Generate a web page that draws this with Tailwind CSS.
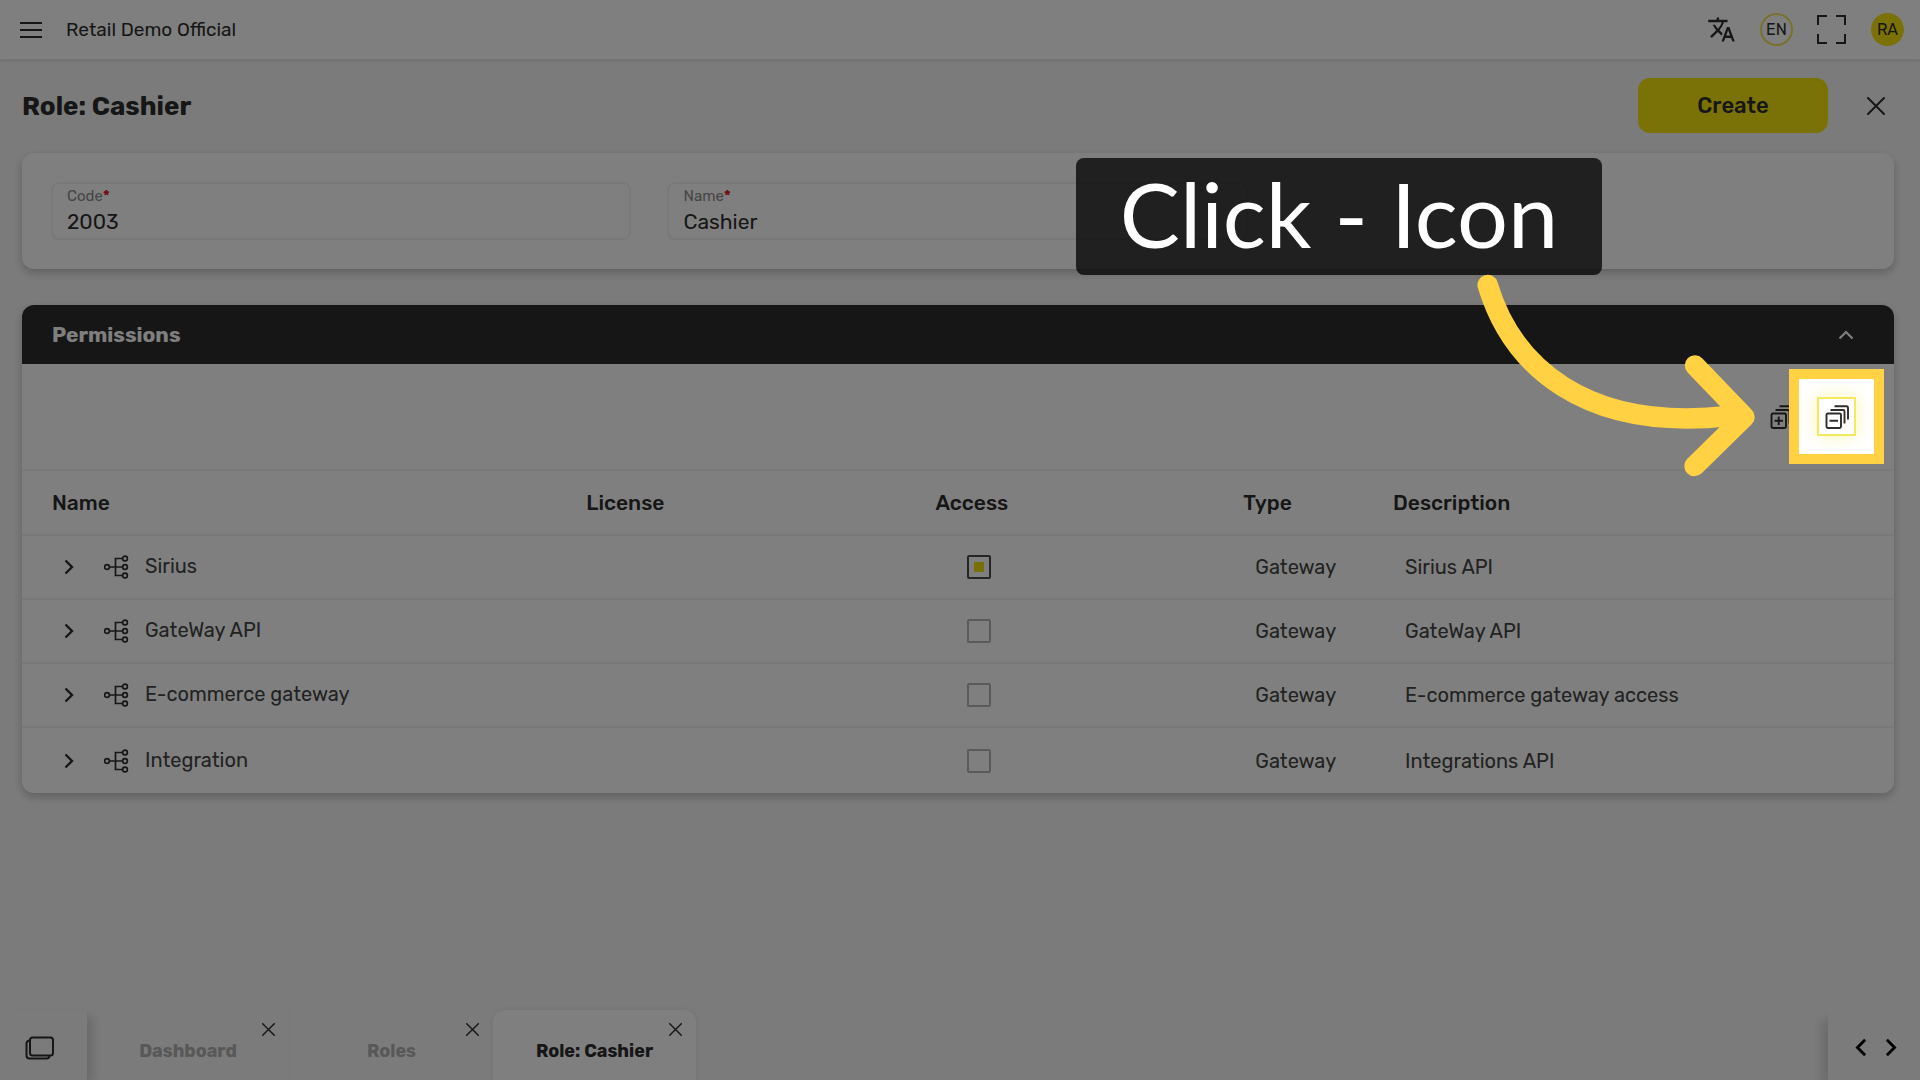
<!DOCTYPE html>
<html lang="en">

<head>
  <meta charset="UTF-8">
  <title>Role: Cashier</title>
  <meta name="viewport" content="width=device-width, initial-scale=1.0">
  <script src="https://cdn.jsdelivr.net/npm/@tailwindcss/browser@4"></script>
</head>

<body class="relative min-h-screen flex flex-col overflow-x-hidden bg-[#f7f7f7] text-[#2d2d2d] font-['Rubik','Roboto',sans-serif]">

  <!-- Shared icons -->
  <svg class="hidden">
    <symbol id="icon-chevron" viewBox="0 0 10 16">
      <path d="M1.500 1.500L8 8L1.500 14.500" fill="none" stroke="currentColor" stroke-width="2.400" />
    </symbol>
    <symbol id="icon-close" viewBox="0 0 18 18">
      <path d="M1 1L17 17M17 1L1 17" fill="none" stroke="currentColor" stroke-width="2" stroke-linecap="round" />
    </symbol>
    <symbol id="icon-gateway" viewBox="0 0 25 24">
      <g fill="none" stroke="currentColor" stroke-width="1.700">
        <circle cx="3" cy="12" r="2.400" />
        <circle cx="21" cy="3.500" r="2.400" />
        <circle cx="21" cy="12" r="2.400" />
        <circle cx="21" cy="20.500" r="2.400" />
        <path d="M5.400 12H18.600M18.600 3.500H11.500V20.500H18.600" />
      </g>
    </symbol>
    <symbol id="icon-stack" viewBox="0 0 24 24">
      <g fill="none" stroke="currentColor" stroke-width="1.900">
        <rect x="1.500" y="8.500" width="14.500" height="14.500" rx="1.500" />
        <path d="M5.500 5H18Q19.500 5 19.500 6.500V18.500M9.500 1.300H21.500Q23 1.300 23 2.800V14.500M4.500 15.800H13" />
      </g>
    </symbol>
  </svg>

  <!-- Top bar -->
  <header class="h-[60px] flex items-center justify-between pl-5 pr-4 bg-white border-b border-[#ececec] shadow-sm">
    <div class="flex items-center gap-6">
      <button aria-label="Menu">
        <svg class="w-[22px] h-[18px]" viewBox="0 0 22 18">
          <path d="M0 2H22M0 9H22M0 16H22" stroke="currentColor" stroke-width="2" />
        </svg>
      </button>
      <span class="text-[19px] leading-6">Retail Demo Official</span>
    </div>
    <div class="flex items-center gap-6">
      <button aria-label="Translate">
        <svg class="size-[29px]" viewBox="0 0 24 24" fill="currentColor">
          <path d="M12.870 15.070l-2.540-2.510.030-.030A17.520 17.520 0 0 0 14.070 6H17V4h-7V2H8v2H1v1.990h11.170C11.500 7.920 10.440 9.750 9 11.350 8.070 10.320 7.300 9.190 6.690 8h-2c.730 1.630 1.730 3.170 2.980 4.560l-5.090 5.020L4 19l5-5 3.110 3.110.760-2.040zM18.500 10h-2L12 22h2l1.120-3h4.750L21 22h2l-4.500-12zm-2.620 7l1.620-4.330L19.120 17h-3.240z" />
        </svg>
      </button>
      <button class="size-[33px] rounded-full border-2 border-[#efe25a] text-base leading-none">EN</button>
      <button aria-label="Full screen">
        <svg class="size-[30px]" viewBox="0 0 30 30">
          <path d="M10 1H1V10M19 1H28V10M1 19V28H10M28 19V28H19" fill="none" stroke="currentColor" stroke-width="2" />
        </svg>
      </button>
      <button class="size-[33px] rounded-full bg-[#f5e30e] text-base leading-none">RA</button>
    </div>
  </header>

  <main class="flex-1 pl-[22px] pr-[26px]">
    <div class="h-[93px] flex items-center justify-between">
      <h1 class="text-[26px] leading-8 font-bold">Role: Cashier</h1>
      <div class="flex items-center gap-[39px] pr-[9px] pb-[2px]">
        <button class="w-[190px] h-[55px] rounded-xl bg-[#f5e30e] text-[22px] font-medium">Create</button>
        <button aria-label="Close"><svg class="size-[18px]"><use href="#icon-close" /></svg></button>
      </div>
    </div>

    <form class="flex gap-9 px-[29px] py-[29px] bg-white rounded-xl shadow-[0_4px_10px_rgba(0,0,0,0.22)]">
      <div class="w-[32%] h-[58px] px-[14px] pt-[3px] border-2 border-[#f2f2f2] rounded-lg">
        <label for="code" class="block text-[15px] leading-[18px] text-[#8c8c8c]">Code<span class="text-[#e02020] font-bold">*</span></label>
        <input id="code" value="2003" class="block w-full text-[21px] leading-[34px] outline-none">
      </div>
      <div class="w-[32%] h-[58px] px-[14px] pt-[3px] border-2 border-[#f2f2f2] rounded-lg">
        <label for="name" class="block text-[15px] leading-[18px] text-[#8c8c8c]">Name<span class="text-[#e02020] font-bold">*</span></label>
        <input id="name" value="Cashier" class="block w-full text-[21px] leading-[34px] outline-none">
      </div>
    </form>

    <section class="mt-9 bg-white rounded-xl shadow-[0_4px_10px_rgba(0,0,0,0.22)]">
      <div class="h-[59px] flex items-center justify-between pl-[30px] pr-10 rounded-t-xl bg-[#2d2d2d] text-white">
        <h2 class="text-[21px] leading-7 font-bold">Permissions</h2>
        <button aria-label="Collapse section">
          <svg class="w-4 h-[10px]" viewBox="0 0 16 10">
            <path d="M1.500 8.500L8 2L14.500 8.500" fill="none" stroke="currentColor" stroke-width="2.200" />
          </svg>
        </button>
      </div>

      <div class="h-[105px] flex items-center justify-end gap-4 pr-[38px]">
        <button aria-label="Expand all" class="size-[39px] flex items-center justify-center">
          <svg class="size-6" viewBox="0 0 24 24">
            <use href="#icon-stack" />
            <path d="M8.700 11.600V20" stroke="currentColor" stroke-width="1.900" />
          </svg>
        </button>
        <div class="relative">
          <button aria-label="Collapse all" class="size-[39px] flex items-center justify-center border-2 border-[#f5ea5e] bg-white shadow-[0_0_18px_rgba(245,230,60,0.4)]">
            <svg class="size-6"><use href="#icon-stack" /></svg>
          </button>
          <!-- Spotlight: the outer shadow dims everything else -->
          <div class="absolute -inset-7 z-40 border-[10px] border-[#ffd143] shadow-[0_0_0_3000px_rgba(0,0,0,0.5)] pointer-events-none"></div>
        </div>
      </div>

      <table class="w-full table-fixed text-left text-[20px] leading-6">
        <colgroup>
          <col class="w-[29.5%]">
          <col class="w-[18.6%]">
          <col class="w-[16.5%]">
          <col class="w-[8%]">
          <col>
        </colgroup>
        <thead>
          <tr class="h-[65px] border-y-2 border-[#f3f3f3] text-[21px]">
            <th class="pl-[30px] font-medium">Name</th>
            <th class="pl-3 font-medium">License</th>
            <th class="pl-[13px] font-medium">Access</th>
            <th class="pl-3 font-medium">Type</th>
            <th class="pl-3 font-medium">Description</th>
          </tr>
        </thead>
        <tbody id="rows" class="text-[#444]"></tbody>
      </table>
    </section>
  </main>

  <!-- Open tabs -->
  <footer class="h-[70px] flex">
    <div class="w-[87px] flex items-center pl-[25px] pt-[6px] shadow-[8px_4px_10px_-2px_rgba(0,0,0,0.15)]">
      <button aria-label="Windows">
        <svg class="w-[30px] h-6" viewBox="0 0 30 24">
          <g fill="none" stroke="currentColor" stroke-width="2">
            <rect x="5" y="1.500" width="23" height="18" rx="2.500" />
            <path d="M5 4.500Q1.500 4.500 1.500 8V19.500Q1.500 22.500 4.500 22.500H21.500Q24.500 22.500 24.500 19.500" />
          </g>
        </svg>
      </button>
    </div>
    <nav class="flex-1 flex text-lg leading-6 font-bold text-[#b0b0b0]">
      <div class="relative w-[203px] flex items-center justify-center pt-3 border-r border-[#f0f0f0]">
        <a href="#">Dashboard</a>
        <button aria-label="Close Dashboard" class="absolute top-[13px] right-[14px] text-[#2d2d2d]"><svg class="size-[13px]"><use href="#icon-close" /></svg></button>
      </div>
      <div class="relative w-[203px] flex items-center justify-center pt-3">
        <a href="#">Roles</a>
        <button aria-label="Close Roles" class="absolute top-[13px] right-[14px] text-[#2d2d2d]"><svg class="size-[13px]"><use href="#icon-close" /></svg></button>
      </div>
      <div class="relative w-[203px] flex items-center justify-center pt-3 rounded-t-xl bg-white text-[#2d2d2d] shadow-[0_0_6px_rgba(0,0,0,0.08)]">
        <a href="#">Role: Cashier</a>
        <button aria-label="Close Role: Cashier" class="absolute top-[13px] right-[14px]"><svg class="size-[13px]"><use href="#icon-close" /></svg></button>
      </div>
    </nav>
    <div class="w-[92px] flex items-center justify-center gap-[18px] pt-1 pl-[3px] text-black shadow-[-8px_8px_10px_-2px_rgba(0,0,0,0.15)]">
      <button aria-label="Previous tab"><svg class="w-3 h-[19px] rotate-180"><use href="#icon-chevron" /></svg></button>
      <button aria-label="Next tab"><svg class="w-3 h-[19px]"><use href="#icon-chevron" /></svg></button>
    </div>
  </footer>

  <!-- Callout and arrow pointing at the spotlight -->
  <div class="absolute z-50 top-[158px] right-[318px] w-[526px] h-[117px] flex items-center justify-center pb-2 rounded-lg bg-black/75 text-white text-[90px] leading-none whitespace-nowrap font-['Lato',sans-serif]">Click - Icon</div>
  <svg class="absolute z-50 top-[270px] right-[160px] w-[290px] h-[212px]" viewBox="0 0 290 212">
    <g fill="none" stroke="#ffd143" stroke-width="20.500" stroke-linecap="round" stroke-linejoin="round">
      <path d="M17.700 15C42 96 115 162 259 146" />
      <path d="M225 95.500L274.500 147L224.500 196" />
    </g>
  </svg>

  <script>
    const rows = [
      { name: "Sirius", type: "Gateway", description: "Sirius API", partial: true },
      { name: "GateWay API", type: "Gateway", description: "GateWay API" },
      { name: "E-commerce gateway", type: "Gateway", description: "E-commerce gateway access" },
      { name: "Integration", type: "Gateway", description: "Integrations API" },
    ];

    document.getElementById("rows").innerHTML = rows.map((row) => `
      <tr class="h-16 border-b-2 border-[#f3f3f3] last:h-[66px] last:border-b-0">
        <td class="pl-[42px]">
          <div class="flex items-center">
            <button aria-label="Expand ${row.name}" class="mr-[30px] text-[#2d2d2d]"><svg class="w-[10px] h-4"><use href="#icon-chevron" /></svg></button>
            <svg class="w-[25px] h-6 mr-4 text-[#2d2d2d]"><use href="#icon-gateway" /></svg>
            <span class="pb-[2px]">${row.name}</span>
          </div>
        </td>
        <td></td>
        <td class="pl-[45px]">
          <input type="checkbox" aria-label="${row.name} access" ${row.partial ? "data-partial" : ""}
            class="block size-6 appearance-none border-2 border-[#b4b4b4] rounded-xs bg-white data-partial:border-[#4a4a4a] data-partial:bg-[#f0de10] data-partial:shadow-[inset_0_0_0_5px_white]">
        </td>
        <td class="pl-6">${row.type}</td>
        <td class="pl-6">${row.description}</td>
      </tr>`).join("");

    document.querySelectorAll("[data-partial]").forEach((box) => {
      box.indeterminate = true;
    });
  </script>
</body>

</html>
